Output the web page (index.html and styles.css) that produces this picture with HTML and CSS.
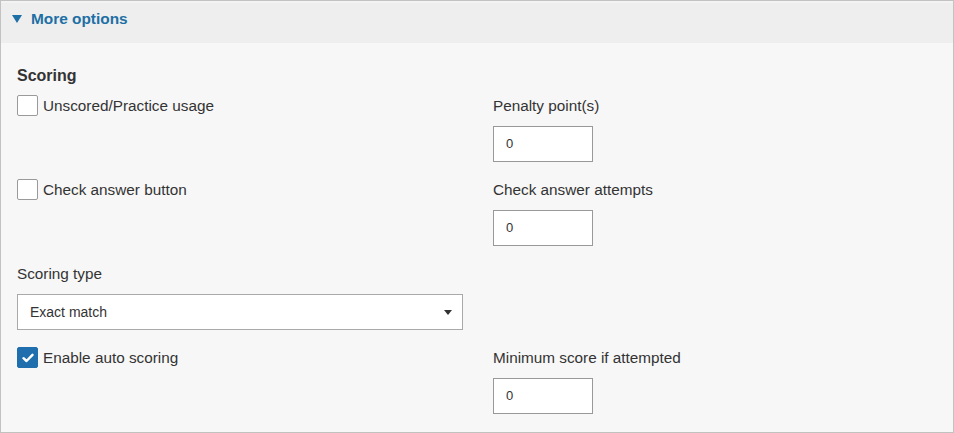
FILE: index.html
```html
<!DOCTYPE html>
<html lang="en">
<head>
<meta charset="utf-8">
<title>More options</title>
<link rel="stylesheet" href="styles.css">
</head>
<body>
<section class="panel">
  <header class="panel-header">
    <svg class="caret" width="10" height="8" viewBox="0 0 10 8"><path d="M0 0 H10 L5 8 Z" fill="#1d6fa5"/></svg>
    <span class="panel-title">More options</span>
  </header>
  <div class="panel-body">
    <h3 class="section-title">Scoring</h3>
    <div class="grid">
      <label class="check"><span class="box"></span><span>Unscored/Practice usage</span></label>
      <div class="field">
        <span class="field-label">Penalty point(s)</span>
        <div class="num-input">0</div>
      </div>

      <label class="check"><span class="box"></span><span>Check answer button</span></label>
      <div class="field">
        <span class="field-label">Check answer attempts</span>
        <div class="num-input">0</div>
      </div>

      <div class="field">
        <span class="field-label">Scoring type</span>
        <div class="select">
          <span>Exact match</span>
          <svg width="8" height="5" viewBox="0 0 8 5"><path d="M0 0 H8 L4 5 Z" fill="#333"/></svg>
        </div>
      </div>
      <div></div>

      <label class="check"><span class="box checked"><svg width="12" height="10" viewBox="0 0 12 10"><path d="M1.5 5.2 L4.5 8 L10.5 1.8" fill="none" stroke="#fff" stroke-width="2.4" stroke-linecap="round" stroke-linejoin="round"/></svg></span><span>Enable auto scoring</span></label>
      <div class="field">
        <span class="field-label">Minimum score if attempted</span>
        <div class="num-input">0</div>
      </div>
    </div>
  </div>
</section>
</body>
</html>
```

FILE: styles.css
```css
* { box-sizing: border-box; }
html, body { margin: 0; padding: 0; }
body {
  font-family: "Liberation Sans", Arial, sans-serif;
  color: #333;
  background: #fff;
}
.panel {
  width: 954px;
  height: 433px;
  border: 1px solid #c2c2c2;
  background: #f7f7f7;
}
.panel-header {
  height: 42px;
  background: #eeeeee;
  border-top: 2px solid #f3f3f3;
  display: flex;
  align-items: flex-start;
  padding: 6px 0 0 11px;
  gap: 9px;
}
.caret { margin-top: 6px; }
.panel-title {
  font-size: 15.4px;
  line-height: 20px;
  font-weight: bold;
  color: #1d6fa5;
}
.panel-body {
  padding: 23px 16px 0 16px;
}
.section-title {
  margin: 0 0 9px 0;
  font-size: 16px;
  line-height: 20px;
  font-weight: bold;
  color: #333;
}
.grid {
  display: grid;
  grid-template-columns: 476px 1fr;
  row-gap: 17px;
  align-items: start;
}
.check {
  display: flex;
  align-items: center;
  gap: 5px;
  font-size: 15.3px;
  line-height: 20px;
}
.check > span:last-child { padding-top: 1px; }
.box {
  width: 21px;
  height: 21px;
  border: 1px solid #9a9a9a;
  border-radius: 2px;
  background: #fff;
  display: flex;
  align-items: center;
  justify-content: center;
}
.box.checked {
  background: #1f6fae;
  border-color: #1f6fae;
}
.field {
  display: flex;
  flex-direction: column;
  gap: 10px;
  align-items: flex-start;
}
.field-label {
  font-size: 15.3px;
  line-height: 20px;
  padding-top: 1px;
}
.num-input {
  width: 100px;
  height: 36px;
  border: 1px solid #999;
  background: #fff;
  font-size: 13px;
  line-height: 34px;
  padding-left: 12px;
  color: #333;
}
.select {
  width: 446px;
  height: 36px;
  border: 1px solid #a9a9a9;
  background: #fff;
  font-size: 14px;
  display: flex;
  align-items: center;
  justify-content: space-between;
  padding: 0 10px 0 12px;
}
```
